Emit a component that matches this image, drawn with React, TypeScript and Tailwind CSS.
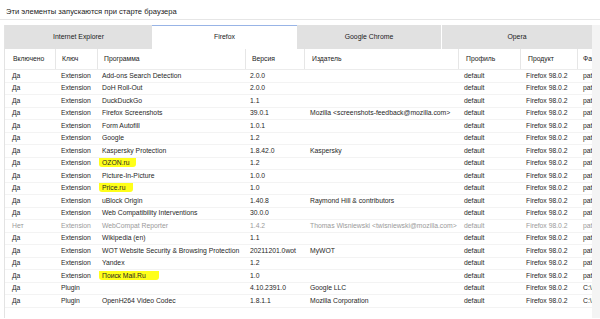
import React from "react";

type Row = {
  on: string;
  key: string;
  prog: string;
  ver: string;
  pub: string;
  path: string;
  off?: boolean;
  hl?: string;
};

const rows: Row[] = [
  { on: "Да", key: "Extension", prog: "Add-ons Search Detection", ver: "2.0.0", pub: "", path: "path" },
  { on: "Да", key: "Extension", prog: "DoH Roll-Out", ver: "2.0.0", pub: "", path: "path" },
  { on: "Да", key: "Extension", prog: "DuckDuckGo", ver: "1.1", pub: "", path: "path" },
  { on: "Да", key: "Extension", prog: "Firefox Screenshots", ver: "39.0.1", pub: "Mozilla <screenshots-feedback@mozilla.com>", path: "path" },
  { on: "Да", key: "Extension", prog: "Form Autofill", ver: "1.0.1", pub: "", path: "path" },
  { on: "Да", key: "Extension", prog: "Google", ver: "1.2", pub: "", path: "path" },
  { on: "Да", key: "Extension", prog: "Kaspersky Protection", ver: "1.8.42.0", pub: "Kaspersky", path: "path" },
  { on: "Да", key: "Extension", prog: "OZON.ru", ver: "1.2", pub: "", path: "path", hl: "w-[37px]" },
  { on: "Да", key: "Extension", prog: "Picture-In-Picture", ver: "1.0.0", pub: "", path: "path" },
  { on: "Да", key: "Extension", prog: "Price.ru", ver: "1.0", pub: "", path: "path", hl: "w-[34px]" },
  { on: "Да", key: "Extension", prog: "uBlock Origin", ver: "1.40.8", pub: "Raymond Hill & contributors", path: "path" },
  { on: "Да", key: "Extension", prog: "Web Compatibility Interventions", ver: "30.0.0", pub: "", path: "path" },
  { on: "Нет", key: "Extension", prog: "WebCompat Reporter", ver: "1.4.2", pub: "Thomas Wisniewski <twisniewski@mozilla.com>", path: "path", off: true },
  { on: "Да", key: "Extension", prog: "Wikipedia (en)", ver: "1.1", pub: "", path: "path" },
  { on: "Да", key: "Extension", prog: "WOT Website Security & Browsing Protection", ver: "20211201.0wot", pub: "MyWOT", path: "path" },
  { on: "Да", key: "Extension", prog: "Yandex", ver: "1.2", pub: "", path: "path" },
  { on: "Да", key: "Extension", prog: "Поиск Mail.Ru", ver: "1.0", pub: "", path: "path", hl: "w-[60px]" },
  { on: "Да", key: "Plugin", prog: "", ver: "4.10.2391.0", pub: "Google LLC", path: "C:\\Program" },
  { on: "Да", key: "Plugin", prog: "OpenH264 Video Codec", ver: "1.8.1.1", pub: "Mozilla Corporation", path: "C:\\Program" },
];

const font = { fontFamily: '"Liberation Sans", Arial, sans-serif' };

export default function App() {
  return (
    <div className="w-[600px] h-[319px] overflow-hidden bg-white text-[#222]" style={font}>
      <div className="h-[20px] border-b border-[#e6e6e6] flex items-center pt-[4px] pl-[6px] text-[7.6px] text-[#1a1a1a]">
        Эти элементы запускаются при старте браузера
      </div>
      <div className="mt-[5px] flex">
        <div className="w-[4px]" />
        <div className="w-[588px] border-l border-[#e3e3e3]">
          {/* Tabs */}
          <div className="h-[24px] flex text-[6.9px] text-[#1a1a1a]">
            <div className="w-[147px] bg-[#e1e1e1] flex items-center justify-center">Internet Explorer</div>
            <div className="w-[145px] bg-white border-t border-[#98b4e6] flex items-center justify-center">Firefox</div>
            <div className="w-[145px] bg-[#e1e1e1] border-r border-white flex items-center justify-center">Google Chrome</div>
            <div className="flex-1 bg-[#e1e1e1] flex items-center justify-center">Opera</div>
          </div>
          {/* Header */}
          <div className="h-[21px] flex border-b border-[#ececec] text-[6.8px] text-[#1a1a1a] bg-white">
            <div className="w-[51px] pl-[8px] flex items-center border-r border-[#e6e6e6]">Включено</div>
            <div className="w-[42px] pl-[6px] flex items-center border-r border-[#e6e6e6]">Ключ</div>
            <div className="w-[148px] pl-[6px] flex items-center border-r border-[#e6e6e6]">Программа</div>
            <div className="w-[59px] pl-[6px] flex items-center border-r border-[#e6e6e6]">Версия</div>
            <div className="w-[154px] pl-[7px] flex items-center border-r border-[#e6e6e6]">Издатель</div>
            <div className="w-[62px] pl-[7px] flex items-center border-r border-[#e6e6e6]">Профиль</div>
            <div className="w-[57px] pl-[7px] flex items-center border-r border-[#e6e6e6]">Продукт</div>
            <div className="flex-1 pl-[5px] flex items-center overflow-hidden whitespace-nowrap">Файл</div>
          </div>
          {/* Rows */}
          <div className="text-[6.8px]">
            {rows.map((r, i) => (
              <div
                key={i}
                className={
                  "h-[12.5px] flex items-center whitespace-nowrap border-b border-[#f3f3f3] " +
                  (r.off ? "text-[#9a9a9a]" : "text-[#1f1f1f]")
                }
              >
                <div className="w-[51px] pl-[7px]">{r.on}</div>
                <div className="w-[42px] pl-[5px]">{r.key}</div>
                <div className="w-[148px] pl-[4px] overflow-hidden">
                  {r.hl ? (
                    <span className="relative inline-block">
                      <span
                        className={
                          "absolute left-[-3px] top-[-3px] h-[12px] rounded-[3px] bg-[#ffff1a] " + r.hl
                        }
                      />
                      <span className="relative">{r.prog}</span>
                    </span>
                  ) : (
                    r.prog
                  )}
                </div>
                <div className="w-[59px] pl-[4px] overflow-hidden">{r.ver}</div>
                <div className="w-[154px] pl-[5px] overflow-hidden">{r.pub}</div>
                <div className="w-[62px] pl-[5px]">default</div>
                <div className="w-[57px] pl-[5px]">Firefox 98.0.2</div>
                <div className="flex-1 pl-[5px] overflow-hidden">{r.path}</div>
              </div>
            ))}
          </div>
        </div>
        <div className="flex-1 bg-[#f4f4f4] h-[293px]" />
      </div>
    </div>
  );
}
